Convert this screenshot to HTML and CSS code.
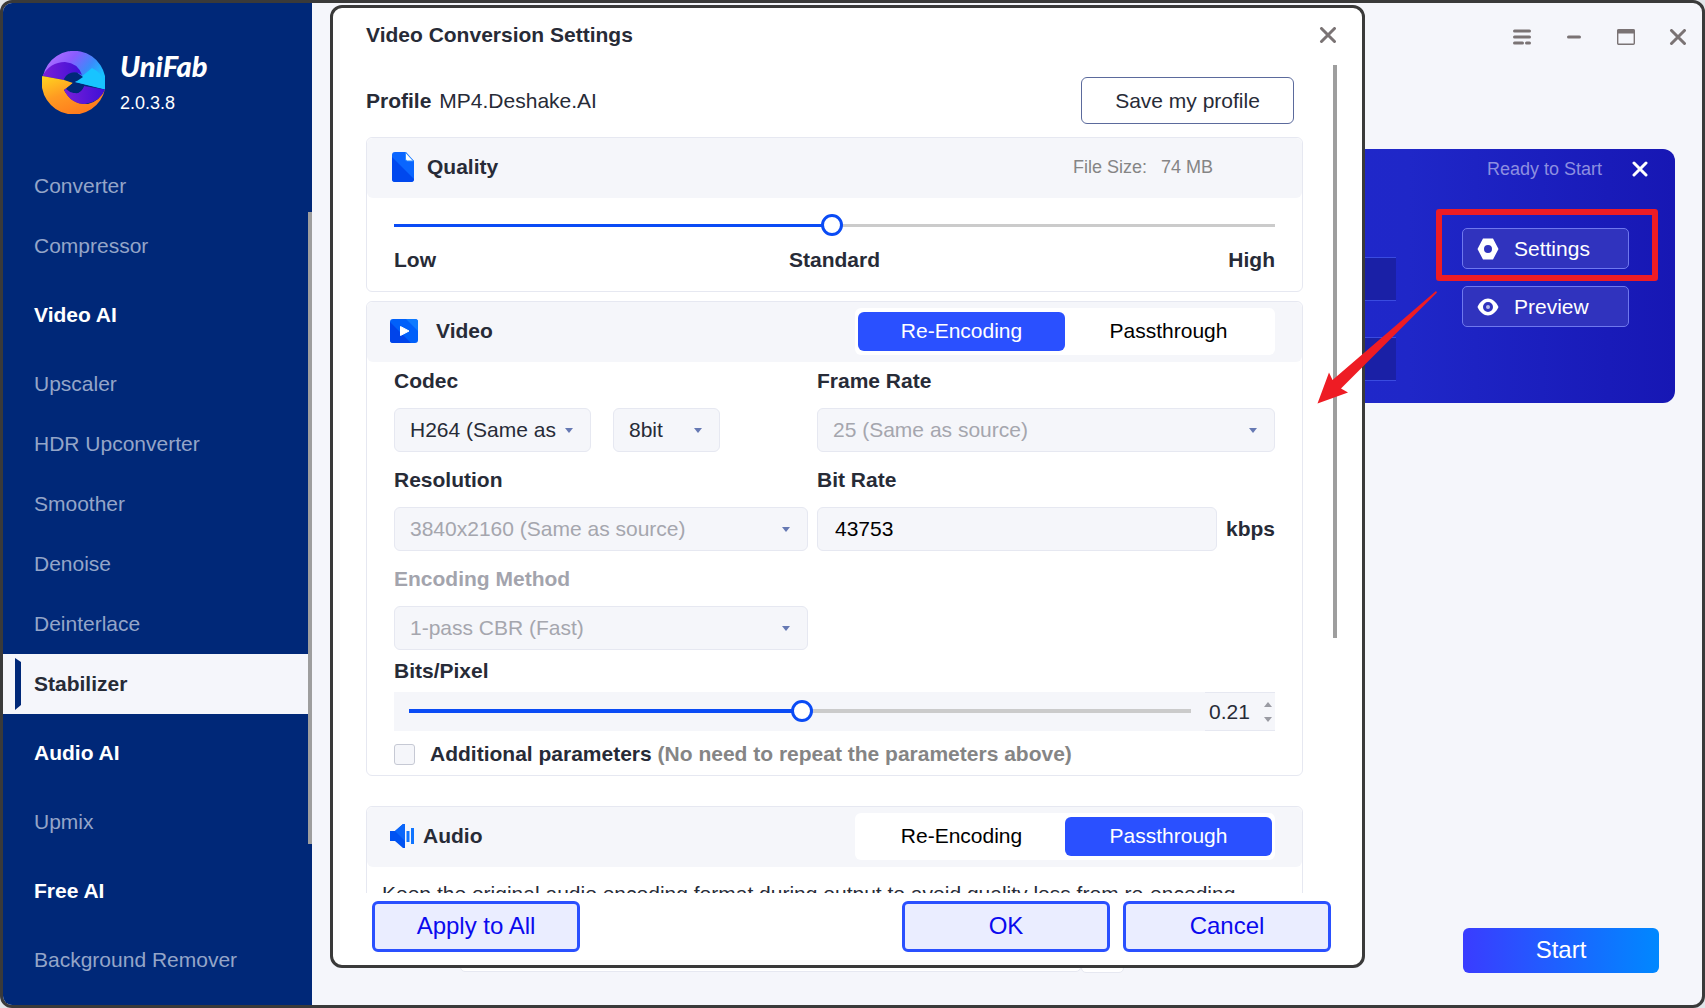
FILE: index.html
```html
<!DOCTYPE html>
<html lang="en">
<head>
<meta charset="utf-8">
<title>UniFab</title>
<link rel="stylesheet" href="styles.css">
</head>
<body>
<div class="window">
  <aside class="sidebar">
    <div class="brand">
      <svg class="brand-logo" viewBox="0 0 63 63" aria-hidden="true">
        <defs>
          <linearGradient id="sky" x1="0" y1="0" x2="1" y2="0.5">
            <stop offset="0.1" stop-color="#b070ff"/><stop offset="0.45" stop-color="#8a5cff"/><stop offset="0.75" stop-color="#3c8afa"/><stop offset="1" stop-color="#16c2ff"/>
          </linearGradient>
          <linearGradient id="sun" x1="0" y1="0" x2="0.6" y2="1">
            <stop offset="0" stop-color="#ffd61f"/><stop offset="0.5" stop-color="#ff9a22"/><stop offset="1" stop-color="#ff7a1c"/>
          </linearGradient>
          <linearGradient id="violet" x1="0" y1="0" x2="1" y2="0">
            <stop offset="0" stop-color="#7a1fd8"/><stop offset="1" stop-color="#3d0fd6"/>
          </linearGradient>
        </defs>
        <path d="M1 25A31.500 31.500 0 0 1 63 38L33 31L41 25Z" fill="url(#sky)"/>
        <path d="M33 31L50 17Q60 22 62.500 31L63 38.500Z" fill="#18c4ff"/>
        <path d="M0.500 25Q8 11 23 11Q36 12 40 24L36 22Q26 20 22 29Z" fill="url(#violet)"/>
        <path d="M0.300 25L22 29L31 32L22 39Q30 54 46 53Q58 50 63 38A31.500 31.500 0 1 1 0.300 25Z" fill="url(#sun)"/>
        <path d="M22 39L25 37Q30 43 36 42Q40 40 42 35L63 38.500Q58 51 43 53Q29 53 22 39Z" fill="url(#violet)"/>
        <path d="M22 28Q26 20 35 21.500L41 26L35 30L31 31Z" fill="#002878"/>
        <path d="M31 32L42 35Q39 43 32 42Q27 41 24 38Z" fill="#002878"/>
      </svg>
      <div class="brand-text">
        <span class="brand-name">UniFab</span>
        <span class="brand-version">2.0.3.8</span>
      </div>
    </div>
    <div class="nav-area">
      <nav class="nav">
        <a class="nav-item" href="#">Converter</a>
        <a class="nav-item" href="#">Compressor</a>
        <h2 class="nav-heading">Video AI</h2>
        <a class="nav-item" href="#">Upscaler</a>
        <a class="nav-item" href="#">HDR Upconverter</a>
        <a class="nav-item" href="#">Smoother</a>
        <a class="nav-item" href="#">Denoise</a>
        <a class="nav-item" href="#">Deinterlace</a>
        <a class="nav-item nav-item-active" href="#" aria-current="page">Stabilizer</a>
        <h2 class="nav-heading">Audio AI</h2>
        <a class="nav-item" href="#">Upmix</a>
        <h2 class="nav-heading">Free AI</h2>
        <a class="nav-item" href="#">Background Remover</a>
      </nav>
      <div class="nav-scroll"></div>
    </div>
  </aside>

  <main class="main">
    <div class="titlebar">
      <button class="icon-button" aria-label="Menu">
        <svg width="18" height="16" viewBox="0 0 18 16" stroke="#7a7374" stroke-width="3" stroke-linecap="round"><path d="M1.500 2h15M1.500 8h15M1.500 14h8M13.500 14h3"/></svg>
      </button>
      <button class="icon-button" aria-label="Minimize">
        <svg width="18" height="16" viewBox="0 0 18 16" stroke="#7a7374" stroke-width="3" stroke-linecap="round"><path d="M3.500 8h11"/></svg>
      </button>
      <button class="icon-button" aria-label="Maximize">
        <svg width="18" height="16" viewBox="0 0 18 16"><rect x="0.700" y="0.700" width="16.600" height="14.600" rx="1" fill="none" stroke="#7a7374" stroke-width="1.400"/><path d="M0.500 0.500h17v4h-17z" fill="#7a7374"/></svg>
      </button>
      <button class="icon-button" aria-label="Close">
        <svg width="18" height="16" viewBox="0 0 18 16" stroke="#7a7374" stroke-width="3" stroke-linecap="round"><path d="M2.500 1.500l13 13M15.500 1.500l-13 13"/></svg>
      </button>
    </div>

    <section class="task">
      <div class="task-fields">
        <div class="task-field"></div>
        <div class="task-field"></div>
      </div>
      <div class="task-side">
        <div class="task-status">
          <span>Ready to Start</span>
          <button class="icon-button" aria-label="Remove">
            <svg width="16" height="16" viewBox="0 0 16 16" stroke="#fff" stroke-width="3" stroke-linecap="round"><path d="M2 2l12 12M14 2L2 14"/></svg>
          </button>
        </div>
        <button class="task-button">
          <svg width="22" height="22" viewBox="0 0 22 22"><path fill="#fff" fill-rule="evenodd" d="M6 0.500h10l5.500 10.500L16 21.500H6L0.500 11zM11 7a4 4 0 1 0 0 8a4 4 0 0 0 0-8z"/></svg>
          Settings
        </button>
        <button class="task-button">
          <svg width="22" height="22" viewBox="0 0 22 22"><path fill="#fff" fill-rule="evenodd" d="M0.500 11C3 5.500 7 2.500 11 2.500S19 5.500 21.500 11C19 16.500 15 19.500 11 19.500S3 16.500 0.500 11zM11 6a5 5 0 1 0 0 10a5 5 0 0 0 0-10z"/><circle cx="11" cy="11" r="2" fill="#b9bbec"/></svg>
          Preview
        </button>
      </div>
    </section>

    <footer class="output">
      <input class="output-path" type="text" aria-label="Output folder">
      <button class="output-browse" aria-label="Browse"></button>
      <button class="start">Start</button>
    </footer>
  </main>

  <div class="dialog" role="dialog" aria-labelledby="dialog-title">
    <header class="dialog-head">
      <h1 class="dialog-title" id="dialog-title">Video Conversion Settings</h1>
      <button class="icon-button" aria-label="Close settings">
        <svg width="18" height="16" viewBox="0 0 18 16" stroke="#7a7374" stroke-width="3" stroke-linecap="round"><path d="M2.500 1.500l13 13M15.500 1.500l-13 13"/></svg>
      </button>
    </header>

    <div class="dialog-body">
      <div class="panels">
        <div class="profile">
          <strong>Profile</strong>
          <span>MP4.Deshake.AI</span>
          <button class="save">Save my profile</button>
        </div>

        <section class="card">
          <div class="card-head">
            <svg class="card-icon" viewBox="0 0 28 30"><path d="M5 0h11l8 9v18a3 3 0 0 1-3 3H5a3 3 0 0 1-3-3V3a3 3 0 0 1 3-3z" fill="#0a66ff"/><path d="M2 5l22 22a3 3 0 0 1-3 3H5a3 3 0 0 1-3-3z" fill="#0048ee"/><path d="M15.500 0.500l8 8.500h-6a2 2 0 0 1-2-2z" fill="#fff" stroke="#2f8cff"/></svg>
            <h2 class="card-title">Quality</h2>
            <p class="file-size"><span>File Size:</span><span>74 MB</span></p>
          </div>
          <div class="quality">
            <input class="range" type="range" min="0" max="1000" value="497" aria-label="Quality" style="--fill: 49.7%">
            <div class="quality-scale"><span>Low</span><span>Standard</span><span>High</span></div>
          </div>
        </section>

        <section class="card">
          <div class="card-head card-head-video">
            <svg class="card-icon" viewBox="0 0 28 24"><rect width="28" height="24" rx="3" fill="#0060fa"/><path d="M16 0h9a3 3 0 0 1 3 3v9z" fill="#0f7bff"/><path d="M0 3l21 21H3a3 3 0 0 1-3-3z" fill="#0044ea"/><path d="M10.500 7.500l8.500 4.500l-8.500 4.500z" fill="#fff" stroke="#fff" stroke-linejoin="round"/></svg>
            <h2 class="card-title">Video</h2>
            <div class="toggle">
              <button class="toggle-option toggle-option-on">Re-Encoding</button>
              <button class="toggle-option">Passthrough</button>
            </div>
          </div>
          <div class="video">
            <div class="fields">
              <div class="field">
                <label for="codec">Codec</label>
                <div class="codec-row">
                  <span class="select codec"><select id="codec"><option>H264 (Same as source)</option></select></span>
                  <span class="select depth"><select aria-label="Bit depth"><option>8bit</option></select></span>
                </div>
              </div>
              <div class="field">
                <label for="fps">Frame Rate</label>
                <span class="select"><select id="fps" disabled><option>25 (Same as source)</option></select></span>
              </div>
              <div class="field">
                <label for="resolution">Resolution</label>
                <span class="select"><select id="resolution" disabled><option>3840x2160 (Same as source)</option></select></span>
              </div>
              <div class="field">
                <label for="bitrate">Bit Rate</label>
                <div class="bitrate-row"><input class="bitrate" id="bitrate" type="text" value="43753"><strong>kbps</strong></div>
              </div>
              <div class="field field-off">
                <label for="method">Encoding Method</label>
                <span class="select"><select id="method" disabled><option>1-pass CBR (Fast)</option></select></span>
              </div>
            </div>
            <div class="bits">
              <label for="bits">Bits/Pixel</label>
              <div class="bits-bar">
                <input class="range range-thick" id="bits" type="range" min="0" max="1000" value="503" style="--fill: 50.3%">
                <div class="spinner">
                  <input class="spinner-value" type="text" value="0.21" aria-label="Bits per pixel">
                  <div class="spinner-steps">
                    <button aria-label="Increase"><svg width="8" height="5" viewBox="0 0 8 5"><path d="M0 5L4 0l4 5z" fill="#9a9ba3"/></svg></button>
                    <button aria-label="Decrease"><svg width="8" height="5" viewBox="0 0 8 5"><path d="M0 0h8L4 5z" fill="#9a9ba3"/></svg></button>
                  </div>
                </div>
              </div>
            </div>
            <label class="extra"><input type="checkbox"><span>Additional parameters <span class="hint">(No need to repeat the parameters above)</span></span></label>
          </div>
        </section>

        <section class="card card-audio">
          <div class="card-head card-head-audio">
            <svg class="card-icon" viewBox="0 0 24 24"><path d="M0 7h5l8-7h2v24h-2l-8-7H0z" fill="#0052f2"/><path d="M5 7l8-7h2v17z" fill="#0a66fa"/><path d="M16.500 7h3v11h-3zM21 4h3v16h-3z" fill="#0f74ff"/></svg>
            <h2 class="card-title">Audio</h2>
            <div class="toggle">
              <button class="toggle-option">Re-Encoding</button>
              <button class="toggle-option toggle-option-on">Passthrough</button>
            </div>
          </div>
          <p class="audio-note">Keep the original audio encoding format during output to avoid quality loss from re-encoding.</p>
        </section>
      </div>
      <div class="dialog-scroll"></div>
    </div>

    <footer class="dialog-foot">
      <button class="action">Apply to All</button>
      <div class="action-pair">
        <button class="action">OK</button>
        <button class="action">Cancel</button>
      </div>
    </footer>
  </div>

  <div class="callout-box"></div>
  <svg class="callout-arrow" viewBox="0 0 121 114" aria-hidden="true"><path d="M119 1L15.500 90L12 82.500L0.500 113.500L31 102.500L24 98.500L120 2.500Z" fill="#ee1c24"/></svg>
</div>
</body>
</html>
```

FILE: styles.css
```css
* {
  box-sizing: border-box;
}

body {
  margin: 0;
  background: #e2e5e9;
  color: #272b37;
  font: 21px/24px "Liberation Sans", Arial, sans-serif;
}

h1, h2, p {
  margin: 0;
  font-size: inherit;
}

button, input, select {
  margin: 0;
  padding: 0;
  border: 0;
  background: none;
  color: inherit;
  font: inherit;
}

svg {
  display: block;
  flex: none;
}

.window {
  position: relative;
  display: flex;
  height: 100vh;
  overflow: hidden;
  border: 3px solid #3a3a3a;
  border-radius: 12px;
  background: #f5f6fb;
}

/* Sidebar */

.sidebar {
  display: flex;
  flex-direction: column;
  flex: none;
  width: 309px;
  background: #002878;
  color: #fff;
}

.brand {
  display: flex;
  align-items: center;
  gap: 15px;
  height: 153px;
  padding: 6px 0 0 39px;
}

.brand-logo {
  width: 63px;
  height: 63px;
}

.brand-text {
  display: flex;
  flex-direction: column;
  gap: 10px;
}

.brand-name {
  font: italic 900 29px/30px Lato, sans-serif;
}

.brand-version {
  font-size: 18px;
}

.nav-area {
  display: flex;
  flex: 1;
  min-height: 0;
}

.nav {
  flex: 1;
  overflow: hidden;
}

.nav-scroll {
  width: 4px;
  height: 632px;
  margin-top: 56px;
  background: #9e9e9e;
}

.nav-item, .nav-heading {
  display: flex;
  align-items: center;
  padding-left: 31px;
}

.nav-item {
  height: 60px;
  color: #94a5c8;
  text-decoration: none;
}

.nav-heading {
  height: 78px;
}

.nav-item-active {
  gap: 10px;
  padding-left: 12px;
  padding-right: 12px;
  background: #f5f6fb;
  color: #272b37;
  font-weight: bold;
}

.nav-item-active::before {
  content: "";
  width: 6px;
  height: 52px;
  margin-right: 3px;
  background: #002878;
  clip-path: polygon(0 0, 100% 4px, 100% 47px, 0 100%);
}

/* Main area */

.main {
  display: flex;
  flex-direction: column;
  flex: 1;
}

.icon-button {
  display: flex;
  cursor: pointer;
}

.titlebar {
  display: flex;
  justify-content: flex-end;
  gap: 34px;
  padding: 26px 15px 104px 0;
}

.task {
  display: flex;
  justify-content: flex-end;
  height: 254px;
  margin: 0 27px 0 32px;
  border-radius: 12px;
  background: linear-gradient(90deg, #2029d2 50%, #1f27c8 80%, #1717b4);
}

.task-fields {
  flex: 1;
  padding-top: 108px;
}

.task-field {
  height: 44px;
  margin-bottom: 36px;
  border: solid #3a4be0;
  border-width: 1px 0;
  background: #1a20a6;
}

.task-side {
  display: flex;
  flex-direction: column;
  align-items: center;
  gap: 17px;
  width: 279px;
  padding: 8px 0 0 20px;
}

.task-status {
  display: flex;
  align-items: center;
  align-self: flex-end;
  gap: 30px;
  margin-bottom: 30px;
  padding-right: 27px;
  color: #8d8fe0;
  font-size: 18px;
}

.task-button {
  display: flex;
  align-items: center;
  gap: 15px;
  width: 167px;
  height: 41px;
  padding-left: 14px;
  border: 1px solid #6f78ee;
  border-radius: 5px;
  background: #3033be;
  color: #fff;
}

.output {
  display: flex;
  align-items: flex-start;
  margin-top: auto;
  padding: 0 43px 32px 148px;
}

.output-path {
  flex: 1;
  height: 44px;
  border: 1px solid #e6e8f1;
  border-radius: 5px;
  background: #fff;
}

.output-browse {
  width: 43px;
  height: 45px;
  margin-right: 339px;
  border: 1px solid #e6e8f1;
  border-radius: 5px;
  background: #fff;
}

.start {
  width: 196px;
  height: 45px;
  padding-bottom: 2px;
  border-radius: 6px;
  background: linear-gradient(90deg, #3a3cff, #0088ff);
  color: #fff;
  font-size: 24px;
}

/* Settings dialog */

.dialog {
  position: absolute;
  inset: 2px 337px 37px 327px;
  display: flex;
  flex-direction: column;
  border: 3px solid #3a3a3a;
  border-radius: 12px;
  background: #fff;
}

.dialog-head {
  display: flex;
  justify-content: space-between;
  align-items: center;
  height: 57px;
  padding: 0 25px 3px 33px;
}

.dialog-body {
  display: flex;
  flex: 1;
  gap: 30px;
  min-height: 0;
  padding: 0 25px 0 33px;
}

.panels {
  flex: 1;
  min-width: 0;
  overflow: hidden;
}

.dialog-scroll {
  width: 4px;
  height: 573px;
  background: #9e9e9e;
}

.profile {
  display: flex;
  align-items: center;
  gap: 8px;
  padding: 12px 9px 13px 0;
}

.save {
  width: 213px;
  height: 47px;
  margin-left: auto;
  border: 1px solid #5b6a9c;
  border-radius: 6px;
}

.card {
  margin-bottom: 9px;
  border: 1px solid #e6e8f1;
  border-radius: 6px;
}

.card-audio {
  margin-top: 30px;
}

.card-head {
  display: flex;
  align-items: center;
  gap: 9px;
  height: 60px;
  padding: 0 27px 2px 23px;
  border-radius: 6px;
  background: #f5f6fa;
}

.card-head-video {
  gap: 18px;
}

.card-icon {
  width: 28px;
}

.card-head-audio .card-icon {
  width: 24px;
}

.file-size {
  display: flex;
  gap: 14px;
  margin-left: auto;
  padding-right: 62px;
  color: #858585;
  font-size: 18px;
}

.toggle {
  display: flex;
  margin-left: auto;
  padding: 4px 3px;
  border-radius: 6px;
  background: #fff;
  color: #000;
}

.toggle-option {
  width: 207px;
  height: 39px;
  border-radius: 6px;
}

.toggle-option-on {
  background: #2a50ff;
  color: #fff;
}

.range {
  display: block;
  width: 100%;
  height: 22px;
  appearance: none;
  --track: 3px;
}

.range-thick {
  --track: 4px;
}

.range::-webkit-slider-runnable-track {
  height: var(--track);
  background: linear-gradient(90deg, #0a4bf5 var(--fill), #cbcbcb var(--fill));
}

.range::-webkit-slider-thumb {
  width: 22px;
  height: 22px;
  margin-top: calc((var(--track) - 22px) / 2);
  appearance: none;
  border: 3px solid #0a4bf5;
  border-radius: 50%;
  background: #fff;
}

.quality {
  padding: 16px 27px 19px;
}

.quality-scale {
  display: grid;
  grid-template-columns: 1fr auto 1fr;
  margin-top: 12px;
  font-weight: bold;
}

.quality-scale :last-child {
  text-align: right;
}

.video {
  padding: 7px 27px 9px;
}

.fields {
  display: grid;
  grid-template-columns: 414fr 458fr;
  gap: 16px 9px;
}

.field {
  display: flex;
  flex-direction: column;
  gap: 15px;
  font-weight: bold;
}

.field-off {
  color: #a3a4ad;
}

.codec-row {
  display: flex;
  gap: 22px;
}

.codec {
  width: 197px;
}

.depth {
  width: 107px;
}

.select {
  position: relative;
  display: block;
}

.select::after {
  content: "";
  position: absolute;
  top: 20px;
  right: 18px;
  border: solid transparent;
  border-width: 5px 4px 0;
  border-top-color: #6679b3;
  pointer-events: none;
}

select, .bitrate {
  width: 100%;
  height: 44px;
  border: 1px solid #e6e8f1;
  border-radius: 6px;
  background: #f5f6fa;
  font-weight: normal;
}

select {
  padding: 0 32px 0 15px;
  appearance: none;
  color: #272b37;
}

select:disabled {
  opacity: 1;
  color: #a5a6ae;
}

.bitrate-row {
  display: flex;
  align-items: center;
  gap: 9px;
}

.bitrate {
  flex: 1;
  min-width: 0;
  padding: 0 17px;
  color: #000;
}

.bits {
  display: flex;
  flex-direction: column;
  gap: 9px;
  margin: 9px 0 11px;
  font-weight: bold;
}

.bits-bar {
  display: flex;
  align-items: center;
  gap: 14px;
  height: 39px;
  padding-left: 15px;
  background: #f5f6fa;
}

.bits-bar .range {
  margin-bottom: 1px;
}

.spinner {
  display: flex;
  flex: none;
  align-items: center;
  width: 70px;
  height: 39px;
  padding: 0 3px 0 4px;
  border: solid #e6e8f1;
  border-width: 1px 0;
}

.spinner-value {
  flex: 1;
  min-width: 0;
  font-weight: normal;
}

.spinner-steps {
  display: flex;
  flex-direction: column;
  gap: 10px;
}

.spinner-steps button {
  display: block;
}

.extra {
  display: flex;
  align-items: center;
  gap: 15px;
  font-weight: bold;
}

.extra input {
  width: 21px;
  height: 21px;
  appearance: none;
  border: 1px solid #c6c9d4;
  border-radius: 3px;
  background: #f5f6fa;
}

.hint {
  color: #858585;
}

.audio-note {
  padding: 15px;
  white-space: nowrap;
}

.dialog-foot {
  display: flex;
  justify-content: space-between;
  padding: 8px 31px 13px 39px;
}

.action-pair {
  display: flex;
  gap: 13px;
}

.action {
  width: 208px;
  height: 51px;
  padding-bottom: 2px;
  border: 3px solid #2a50ff;
  border-radius: 6px;
  background: #eaedff;
  color: #0a0aee;
  font-size: 24px;
}

/* Highlight drawn over the window */

.callout-box {
  position: absolute;
  top: 206px;
  right: 44px;
  width: 222px;
  height: 72px;
  border: 6px solid #ee1c24;
  border-radius: 3px;
}

.callout-arrow {
  position: absolute;
  top: 287px;
  right: 264px;
  width: 121px;
  height: 114px;
}
```
